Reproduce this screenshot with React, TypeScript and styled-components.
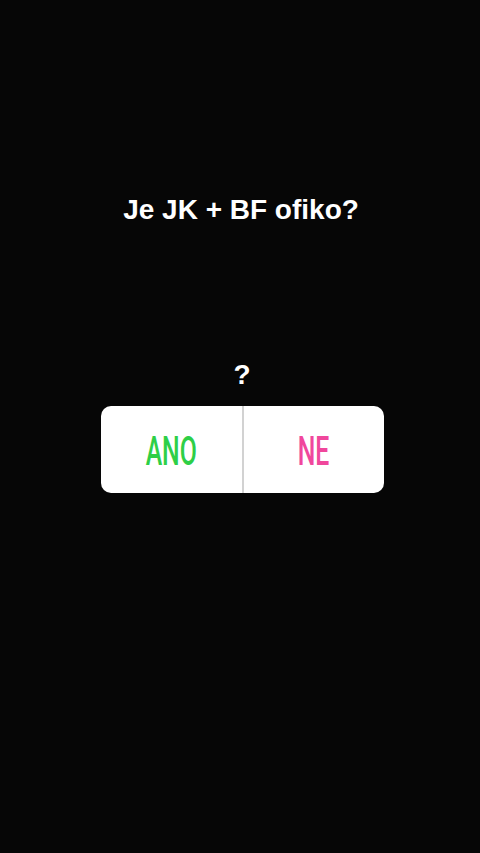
import React from "react";
import styled, { createGlobalStyle } from "styled-components";

const Global = createGlobalStyle`
  html, body { margin: 0; padding: 0; background: #060606; }
  #root { width: 480px; height: 853px; }
`;

const Screen = styled.div`
  width: 480px;
  height: 853px;
  background: #060606;
  display: flex;
  flex-direction: column;
  align-items: center;
  font-family: "Liberation Sans", Arial, sans-serif;
`;

const Title = styled.div`
  margin-top: 193px;
  margin-left: 2px;
  color: #fff;
  font-size: 28px;
  font-weight: 700;
  line-height: 34px;
  height: 34px;
`;

const Question = styled.div`
  margin-top: 133px;
  margin-left: 4px;
  color: #fff;
  font-size: 28px;
  font-weight: 700;
  line-height: 30px;
  height: 30px;
`;

const Poll = styled.div`
  margin-top: 16px;
  margin-left: 5px;
  width: 283px;
  height: 87px;
  background: #fff;
  border-radius: 10px;
  display: flex;
  overflow: hidden;
  font-family: Roboto, "Liberation Sans", sans-serif;
`;

const Option = styled.div<{ $color: string }>`
  flex: 1;
  display: flex;
  align-items: center;
  justify-content: center;
  padding-top: 3px;
  color: ${(p) => p.$color};
  font-size: 40px;
  font-weight: 500;
`;

const Label = styled.span`
  display: inline-block;
  transform: scaleX(0.62);
`;

const Divider = styled.div`
  width: 2px;
  background: #d2d2d2;
`;

export default function App() {
  return (
    <>
      <Global />
      <Screen>
        <Title>Je JK + BF ofiko?</Title>
        <Question>?</Question>
        <Poll>
          <Option $color="#2ecf47">
            <Label>ANO</Label>
          </Option>
          <Divider />
          <Option $color="#f0479c">
            <Label>NE</Label>
          </Option>
        </Poll>
      </Screen>
    </>
  );
}
